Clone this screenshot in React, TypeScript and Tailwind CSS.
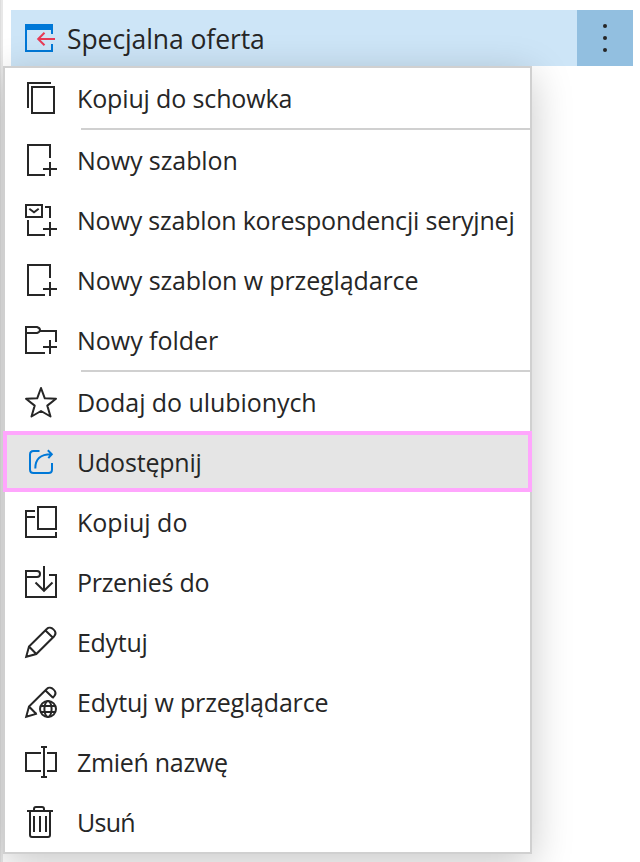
import type { ReactNode } from 'react'

interface MenuItem {
  id: string
  label: string
  icon: ReactNode
  tracking: string
  divider?: boolean
  active?: boolean
}

const PLUS = 'M18 25H32M25 18V32'

function Icon({ children, className = 'text-[#262626]' }: { children: ReactNode; className?: string }) {
  return (
    <svg viewBox="0 0 32 32" fill="none" stroke="currentColor" strokeWidth="2" className={`size-8 shrink-0 overflow-visible ${className}`}>
      {children}
    </svg>
  )
}

const newDocIcon = <Icon><path d={`M25 14V1H3V31H20${PLUS}`} /></Icon>

const items: MenuItem[] = [
  {
    id: 'copy', label: 'Kopiuj do schowka', tracking: 'tracking-[-0.14px]', divider: true,
    icon: <Icon><path d="M26 1H3V26" /><path d="M7 5H29V31H7Z" /></Icon>,
  },
  { id: 'new', label: 'Nowy szablon', tracking: 'tracking-[-0.08px]', icon: newDocIcon },
  {
    id: 'merge', label: 'Nowy szablon korespondencji seryjnej', tracking: 'tracking-[-0.2px]',
    icon: <Icon><path d={`M1 1H17V13H1ZM4.3 4.8L9 8.2L13.7 4.8M20 3H25V14M3 16V31H20${PLUS}`} /></Icon>,
  },
  { id: 'new-web', label: 'Nowy szablon w przeglądarce', tracking: 'tracking-[-0.12px]', icon: newDocIcon },
  {
    id: 'folder', label: 'Nowy folder', tracking: 'tracking-[-0.03px]', divider: true,
    icon: <Icon><path d="M20 29H1V3H12Q15 4 15 6Q15 8 12 9H1M15 7H31V18M18 23H32M25 16V30" /></Icon>,
  },
  {
    id: 'favorite', label: 'Dodaj do ulubionych', tracking: 'tracking-[-0.06px]',
    icon: <Icon><path strokeLinejoin="round" d="M16 2L19.8 12.3L31 12.8L22.3 19.6L25.5 30.5L16 25L6.5 30.5L9.7 19.6L1 12.8L12.2 12.3Z" /></Icon>,
  },
  {
    id: 'share', label: 'Udostępnij', tracking: 'tracking-[-0.2px]', active: true,
    icon: (
      <Icon className="text-[#0078d7]">
        <path d="M14.5 5H8.5Q5 5 5 8.5V23.5Q5 27 8.5 27H23.5Q27 27 27 23.5V17" />
        <path d="M10.3 22.5C10.3 13 15.5 8.2 26 8.2M22.8 4.3L26.8 8.2L23.3 12.2" />
      </Icon>
    ),
  },
  {
    id: 'copy-to', label: 'Kopiuj do', tracking: 'tracking-normal',
    icon: <Icon><path d="M13 1H31V23H13ZM10 5H1V31H31V26M1 11H10" /></Icon>,
  },
  {
    id: 'move-to', label: 'Przenieś do', tracking: 'tracking-[-0.3px]',
    icon: <Icon><path d="M1 11H12Q15 11 15 8Q15 5 12 5H1V31H31V9H24M19 0V24.5M10.5 16.5L19 24.8L27.5 16.5" /></Icon>,
  },
  {
    id: 'edit', label: 'Edytuj', tracking: 'tracking-[-0.3px]',
    icon: <Icon><path d="M1.2 30.8L4 20.5L22 2.8C25.5 -0.8 33.2 5.5 29.2 10.2L11.3 28ZM4 20.5L11.3 28M20.5 4.5L28 11.8" /></Icon>,
  },
  {
    id: 'edit-web', label: 'Edytuj w przeglądarce', tracking: 'tracking-[-0.18px]',
    icon: (
      <Icon>
        <path d="M27.5 12L29.2 10.2C33.2 5.5 25.5 -0.8 22 2.8L4 20.5L1.2 30.8L12 27.6M4 20.5L11.3 28M20.5 4.5L28 11.8" />
        <circle cx="23" cy="23" r="8" />
        <ellipse cx="23" cy="23" rx="3.6" ry="8" />
        <path d="M15.5 20H30.5M15.5 26H30.5" />
      </Icon>
    ),
  },
  {
    id: 'rename', label: 'Zmień nazwę', tracking: 'tracking-[-0.3px]',
    icon: <Icon><path d="M16 7H1V25H16M22 7H31V25H22M19 1V31M16 1H22M16 31H22" /></Icon>,
  },
  {
    id: 'delete', label: 'Usuń', tracking: 'tracking-[-0.7px]',
    icon: <Icon><path d="M2 5H28M9 5V3Q9 1 11 1H17Q19 1 19 3V5M5 5V29Q5 31 7 31H23Q25 31 25 29V5M9 10V26M15 10V26M21 10V26" /></Icon>,
  },
]

function Row({ item }: { item: MenuItem }) {
  return (
    <li>
      <button className={`relative flex h-[60px] w-full items-center pl-5 ${item.active ? 'bg-[#e5e5e5]' : ''}`}>
        {item.icon}
        <span className={`ml-5 text-[25px] leading-none whitespace-nowrap ${item.tracking}`}>{item.label}</span>
        {item.active && <span className="absolute -inset-x-0.5 -top-px bottom-0 border-4 border-[#ffa6fd]" />}
      </button>
      {item.divider && <div className="ml-[76px] h-0.5 bg-[#d0d0d0]" />}
    </li>
  )
}

export default function App() {
  return (
    <div className="flex h-[862px] w-[640px] overflow-hidden bg-white font-['Open_Sans',sans-serif] text-[#262626]">
      <div className="w-[3px] shrink-0 border-l border-[#dedede] bg-[#e8e8e8]" />
      <div className="flex w-[630px] flex-col pt-2.5">
        <div className="ml-2 flex h-14 shrink-0 bg-[#cde5f7]">
          <div className="flex flex-1 items-center pl-3.5">
            <svg viewBox="0 0 32 28" fill="none" strokeWidth="2" className="h-7 w-8 shrink-0">
              <path d="M0 0H28V6H0Z" fill="#0078d7" />
              <path d="M1 4V27H27V20M27 4V10" stroke="#0078d7" />
              <path d="M30 15H13M19.5 8.7L13.2 15L19.5 21.3" stroke="#e83a56" />
            </svg>
            <span className="ml-2.5 pt-0.5 text-[26.5px] leading-none tracking-[-0.08px] whitespace-nowrap">Specjalna oferta</span>
          </div>
          <button className="flex w-14 flex-col items-center justify-center gap-2 bg-[#92bfe0]">
            <span className="size-1 rounded-full bg-[#262626]" />
            <span className="size-1 rounded-full bg-[#262626]" />
            <span className="size-1 rounded-full bg-[#262626]" />
          </button>
        </div>
        <ul className="w-[529px] border-2 border-[#d0d0d0] bg-white shadow-[0_10px_38px_rgba(0,0,0,0.22)]">
          {items.map(item => <Row key={item.id} item={item} />)}
        </ul>
      </div>
    </div>
  )
}
